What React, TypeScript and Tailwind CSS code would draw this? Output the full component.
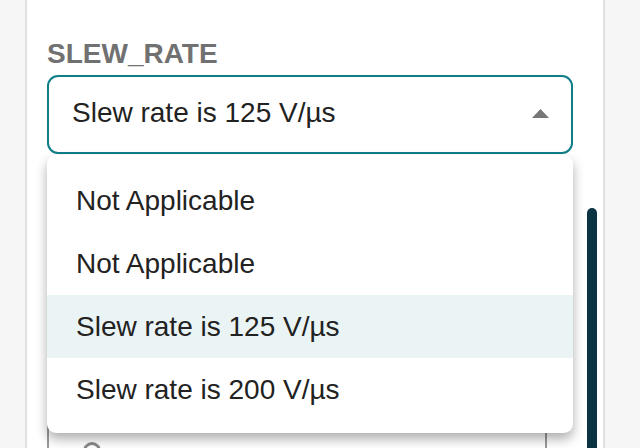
const options = [
  { label: 'Not Applicable', active: false },
  { label: 'Not Applicable', active: false },
  { label: 'Slew rate is 125 V/µs', active: true },
  { label: 'Slew rate is 200 V/µs', active: false },
]

const App: React.FC = () => {
  return (
    <div className="w-[640px] h-[448px] overflow-hidden bg-[#f6f6f6] flex font-['Liberation_Sans',Arial,sans-serif]">
      <div className="relative ml-[25px] w-[580px] h-full bg-white border-x-2 border-[#e0e0e0]">
        <div className="w-[526px] ml-[20px] pt-[40px]">
          <h3 className="text-[28px] leading-[27px] font-bold text-[#717171] h-[27px]">SLEW_RATE</h3>
          <div className="relative mt-[8px]">
            <div className="h-[79px] border-2 border-[#0e7e89] rounded-[11px] flex items-center justify-between pl-[23px] pr-[22px]">
              <span className="text-[28px] leading-[28px] text-[#222] pb-[3px]">Slew rate is 125 V/µs</span>
              <svg width="17" height="9" viewBox="0 0 17 9" className="mb-[3px]">
                <path d="M0 9 L8.5 0 L17 9 Z" fill="#777" />
              </svg>
            </div>
            <ul className="absolute z-10 left-0 top-[80px] w-full bg-white rounded-[9px] pt-[14px] pb-[12px] shadow-[0_6px_12px_rgba(0,0,0,0.32)]">
              {options.map((o, i) => (
                <li
                  key={i}
                  className={
                    o.active
                      ? 'h-[63px] flex items-center pl-[29px] text-[28px] text-[#222] bg-[#ebf4f5]'
                      : 'h-[63px] flex items-center pl-[29px] text-[28px] text-[#222]'
                  }
                >
                  {o.label}
                </li>
              ))}
            </ul>
          </div>
          <div className="mt-[266px] w-[500px] h-[60px] border-2 border-[#9a9a9a] rounded-[6px] flex items-start pl-[34px] pt-[20px]">
            <span className="w-[18px] h-[18px] rounded-full border-[3px] border-[#8a8a8a]" />
          </div>
        </div>
        <div className="absolute right-[6px] top-[208px] bottom-0 w-[10px] rounded-t-full bg-[#0b3341]" />
      </div>
    </div>
  )
}

export default App
